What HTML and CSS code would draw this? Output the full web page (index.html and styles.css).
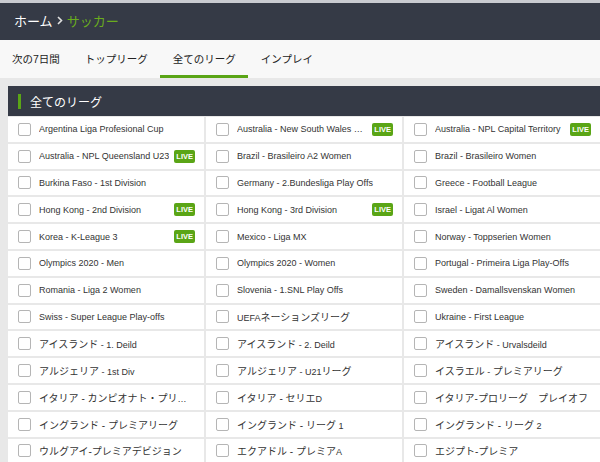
FILE: index.html
```html
<!DOCTYPE html>
<html>

<head>
    <title>サッカー - 全てのリーグ</title>

    <link rel="stylesheet" href="styles.css">
</head>

<body>
    <div class="crumbs">
        <span class="crumb">ホーム</span>
        <svg class="sep" width="6" height="9" viewBox="0 0 6 9"><path d="M1 1 L4.5 4.5 L1 8" fill="none" stroke="#e0e0e0" stroke-width="1.6"/></svg>
        <span class="crumb current">サッカー</span>
    </div>

    <div class="tabs">
        <span class="tab">次の7日間</span>
        <span class="tab">トップリーグ</span>
        <span class="tab active">全てのリーグ</span>
        <span class="tab">インプレイ</span>
    </div>

    <div class="section">
        <div class="section-head">全てのリーグ</div>

        <div class="league-grid">
            <label class="league"><span class="box"></span><span class="name">Argentina Liga Profesional Cup</span></label>
            <label class="league"><span class="box"></span><span class="name">Australia - New South Wales Premier League</span><span class="live">LIVE</span></label>
            <label class="league"><span class="box"></span><span class="name">Australia - NPL Capital Territory</span><span class="live">LIVE</span></label>

            <label class="league"><span class="box"></span><span class="name">Australia - NPL Queensland U23</span><span class="live">LIVE</span></label>
            <label class="league"><span class="box"></span><span class="name">Brazil - Brasileiro A2 Women</span></label>
            <label class="league"><span class="box"></span><span class="name">Brazil - Brasileiro Women</span></label>

            <label class="league"><span class="box"></span><span class="name">Burkina Faso - 1st Division</span></label>
            <label class="league"><span class="box"></span><span class="name">Germany - 2.Bundesliga Play Offs</span></label>
            <label class="league"><span class="box"></span><span class="name">Greece - Football League</span></label>

            <label class="league"><span class="box"></span><span class="name">Hong Kong - 2nd Division</span><span class="live">LIVE</span></label>
            <label class="league"><span class="box"></span><span class="name">Hong Kong - 3rd Division</span><span class="live">LIVE</span></label>
            <label class="league"><span class="box"></span><span class="name">Israel - Ligat Al Women</span></label>

            <label class="league"><span class="box"></span><span class="name">Korea - K-League 3</span><span class="live">LIVE</span></label>
            <label class="league"><span class="box"></span><span class="name">Mexico - Liga MX</span></label>
            <label class="league"><span class="box"></span><span class="name">Norway - Toppserien Women</span></label>

            <label class="league"><span class="box"></span><span class="name">Olympics 2020 - Men</span></label>
            <label class="league"><span class="box"></span><span class="name">Olympics 2020 - Women</span></label>
            <label class="league"><span class="box"></span><span class="name">Portugal - Primeira Liga Play-Offs</span></label>

            <label class="league"><span class="box"></span><span class="name">Romania - Liga 2 Women</span></label>
            <label class="league"><span class="box"></span><span class="name">Slovenia - 1.SNL Play Offs</span></label>
            <label class="league"><span class="box"></span><span class="name">Sweden - Damallsvenskan Women</span></label>

            <label class="league"><span class="box"></span><span class="name">Swiss - Super League Play-offs</span></label>
            <label class="league"><span class="box"></span><span class="name">UEFA<span class="ja">ネーションズリーグ</span></span></label>
            <label class="league"><span class="box"></span><span class="name">Ukraine - First League</span></label>

            <label class="league"><span class="box"></span><span class="name"><span class="ja">アイスランド</span> - 1. Deild</span></label>
            <label class="league"><span class="box"></span><span class="name"><span class="ja">アイスランド</span> - 2. Deild</span></label>
            <label class="league"><span class="box"></span><span class="name"><span class="ja">アイスランド</span> - Urvalsdeild</span></label>

            <label class="league"><span class="box"></span><span class="name"><span class="ja">アルジェリア</span> - 1st Div</span></label>
            <label class="league"><span class="box"></span><span class="name"><span class="ja">アルジェリア</span> - U21<span class="ja">リーグ</span></span></label>
            <label class="league"><span class="box"></span><span class="name"><span class="ja">イスラエル</span> - <span class="ja">プレミアリーグ</span></span></label>

            <label class="league"><span class="box"></span><span class="name"><span class="ja">イタリア - カンピオナト・プリマヴェーラ</span></span></label>
            <label class="league"><span class="box"></span><span class="name"><span class="ja">イタリア - セリエ</span>D</span></label>
            <label class="league"><span class="box"></span><span class="name"><span class="ja">イタリア-プロリーグ　プレイオフ</span></span></label>

            <label class="league"><span class="box"></span><span class="name"><span class="ja">イングランド - プレミアリーグ</span></span></label>
            <label class="league"><span class="box"></span><span class="name"><span class="ja">イングランド - リーグ</span> 1</span></label>
            <label class="league"><span class="box"></span><span class="name"><span class="ja">イングランド - リーグ</span> 2</span></label>

            <label class="league"><span class="box"></span><span class="name"><span class="ja">ウルグアイ-プレミアデビジョン</span></span></label>
            <label class="league"><span class="box"></span><span class="name"><span class="ja">エクアドル - プレミア</span>A</span></label>
            <label class="league"><span class="box"></span><span class="name"><span class="ja">エジプト-プレミア</span></span></label>
        </div>
    </div>
</body>

</html>
```

FILE: styles.css
```css
body {
    margin: 0;
    background-color: #e8e8e8;
    font-family: "Liberation Sans", "Noto Sans CJK JP", sans-serif;
    color: #333333;
    overflow: hidden;
}

.crumbs {
    border-top: 3px solid #c9cbd0;
    background-color: #353a46; /* Dark header */
    display: flex;
    align-items: center;
    padding-left: 14px;
    padding-bottom: 2px;
    box-sizing: border-box;
    height: 40px;
    font-size: 13px;
    color: #ffffff;
}

.sep {
    margin: 0 4px 0 4px;
}

.current {
    color: #6aac1e; /* Green for the current page */
}

.tabs {
    height: 38px;
    background-color: #f8f8f8;
    border-bottom: 8px solid #e8e8e8;
    display: flex;
}

.tab {
    display: flex;
    align-items: center;
    padding: 0 12.5px;
    font-size: 10.5px;
    color: #222222;
    border-bottom: 3px solid transparent;
    margin-top: 2px;
}

.tab:first-child {
    padding-left: 12px;
}

.tab.active {
    border-bottom-color: #5aa516;
}

.section {
    margin-left: 8px;
}

.section-head {
    height: 30px;
    background-color: #353a46;
    color: #ffffff;
    font-size: 12px;
    display: flex;
    align-items: center;
    padding-left: 22px;
    position: relative;
}

.section-head::before {
    content: "";
    position: absolute;
    left: 10px;
    top: 8px;
    width: 3px;
    height: 15px;
    background-color: #5aa516;
}

.league-grid {
    display: grid;
    grid-template-columns: 196px 196px 196px;
    column-gap: 2px;
    row-gap: 2px;
    padding-top: 1px;
}

.league {
    height: 24.8px;
    background-color: #ffffff;
    display: flex;
    align-items: center;
    padding: 0 9px 0 10px;
    font-size: 9px;
}

.box {
    flex: none;
    width: 11px;
    height: 11px;
    margin-right: 8px;
    border: 1px solid #b5b5b5;
    border-radius: 2px;
}

.name {
    flex: 1;
    white-space: nowrap;
    overflow: hidden;
    text-overflow: ellipsis;
}

.ja {
    font-size: 10px;
}

.live {
    flex: none;
    margin-left: 5px;
    background-color: #5aa516;
    color: #ffffff;
    font-size: 7.5px;
    font-weight: bold;
    padding: 2px 2px;
    border-radius: 2px;
}
```
